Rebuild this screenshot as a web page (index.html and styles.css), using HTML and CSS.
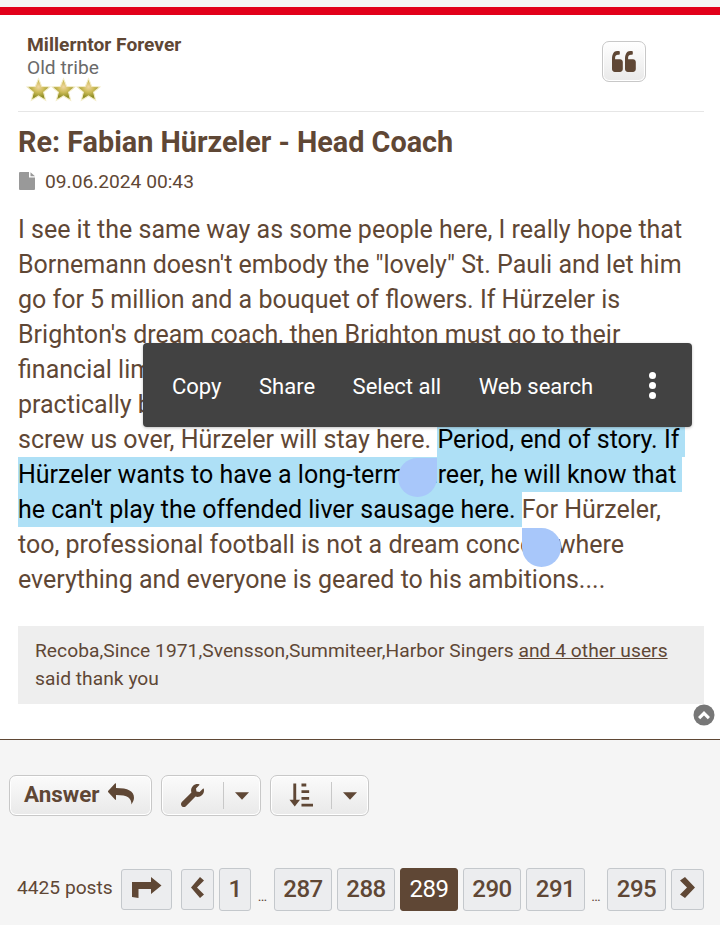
FILE: index.html
```html
<!DOCTYPE html>
<html lang="en">
<head>
<meta charset="utf-8">
<title>Re: Fabian Hürzeler - Head Coach</title>
<link rel="stylesheet" href="styles.css">
</head>
<body>
<svg class="defs" width="0" height="0" aria-hidden="true">
  <defs>
    <radialGradient id="starfill" cx="0.5" cy="0.38" r="0.62">
      <stop offset="0" stop-color="#f0d6a0"/>
      <stop offset="0.4" stop-color="#cdbc58"/>
      <stop offset="0.8" stop-color="#8f8d24"/>
      <stop offset="1" stop-color="#a9a640"/>
    </radialGradient>
    <symbol id="star" viewBox="0 0 24 24">
      <path d="M12 1.500l3 7.400 8 .6-6.100 5.100 2 7.800L12 18.200l-6.900 4.200 2-7.800L1 9.500l8-.6z" fill="url(#starfill)" stroke="#f4edc8" stroke-width="1"/>
    </symbol>
  </defs>
</svg>

<div class="topstrip"></div>

<main class="post">
  <header class="author">
    <div class="author-info">
      <div class="author-name">Millerntor Forever</div>
      <div class="author-rank">Old tribe</div>
      <div class="stars">
        <svg class="star"><use href="#star"/></svg>
        <svg class="star"><use href="#star"/></svg>
        <svg class="star"><use href="#star"/></svg>
      </div>
    </div>
    <button class="quote-btn" aria-label="Quote">
      <svg width="24" height="21" viewBox="0 0 24 21"><path class="ico" d="M5 0h1.800c.6 0 1 .5 1 1v1.800c0 .6-.5 1-1 1H6c-1.700 0-2.900 1.300-2.900 3v1.500H8c1.600 0 2.800 1.200 2.800 2.800v7c0 1.600-1.200 2.900-2.800 2.900H2.800C1.200 21 0 19.700 0 18.100V8C0 3.500 1.800 0 5 0zm13 0h1.800c.6 0 1 .5 1 1v1.800c0 .6-.5 1-1 1H19c-1.700 0-2.900 1.300-2.900 3v1.500H21c1.600 0 2.800 1.200 2.800 2.800v7c0 1.600-1.200 2.900-2.800 2.900h-5.200c-1.600 0-2.800-1.300-2.800-2.900V8c0-4.500 1.800-8 5-8z"/></svg>
    </button>
  </header>

  <h1 class="title">Re: Fabian Hürzeler - Head Coach</h1>
  <div class="meta">
    <svg class="file-ico" width="16" height="18" viewBox="0 0 16 18"><path d="M1 0h9v5.500h6V17a1 1 0 0 1-1 1H1a1 1 0 0 1-1-1V1a1 1 0 0 1 1-1zm10.500.3L16 4.200h-4.500z"/></svg>
    <span>09.06.2024 00:43</span>
  </div>

  <div class="content-wrap">
    <p class="content">I see it the same way as some people here, I really hope that<br>Bornemann doesn't embody the "lovely" St. Pauli and let him<br>go for 5 million and a bouquet of flowers. If Hürzeler is<br>Brighton's dream coach, then Brighton must go to their<br>financial limits and beyond. If they don't, and that is<br>practically blackmail, then Bornemann will simply say no to<br>screw us over, Hürzeler will stay here. <span class="sel">Period, end of story. If</span><br><span class="sel">Hürzeler wants to have a long-term career, he will know that</span><br><span class="sel">he can't play the offended liver sausage here.</span>For Hürzeler,<br>too, professional football is not a dream concert where<br>everything and everyone is geared to his ambitions....</p>

    <div class="handle handle-left"></div>
    <div class="handle handle-right"></div>

    <div class="toolbar">
      <span class="tool-item">Copy</span>
      <span class="tool-item">Share</span>
      <span class="tool-item">Select all</span>
      <span class="tool-item">Web search</span>
      <span class="tool-more"><i></i><i></i><i></i></span>
    </div>
  </div>

  <div class="thanks">Recoba,Since 1971,Svensson,Summiteer,Harbor Singers <u>and 4 other users</u> said thank you</div>

  <div class="back-top">
    <svg width="22" height="22" viewBox="0 0 22 22"><circle cx="11" cy="11" r="10.500" fill="#777"/><path d="M5 13l6-6 6 6-2.200 2.200L11 11.400l-3.800 3.800z" fill="#fff"/></svg>
  </div>
</main>

<section class="actions">
  <button class="btn btn-answer">Answer
    <svg width="26" height="22" viewBox="0 0 26 22"><path class="ico" d="M.3 7.800L7 .6C7.500 0 8 .3 8 1v4c12 0 18 3 18 10 0 3-2 5-2.500 6.500-.2-6.500-3.500-9.500-15.500-9.500v4.200c0 .7-.5 1-1 .4L.3 9.200a1 1 0 0 1 0-1.400z"/></svg>
  </button>
  <button class="btn btn-split" aria-label="Tools">
    <span class="split-main">
      <svg width="23" height="23" viewBox="0 0 512 512"><path class="ico" d="M507.730 109.100c-2.240-9.030-13.540-12.090-20.120-5.510l-74.360 74.360-67.880-11.310-11.310-67.880 74.360-74.360c6.620-6.620 3.430-17.900-5.660-20.160-47.380-11.740-99.550.91-136.580 37.930-39.640 39.640-50.550 97.100-34.050 147.200L18.740 402.760c-24.990 24.990-24.990 65.510 0 90.500 24.990 24.990 65.510 24.990 90.500 0l213.210-213.210c50.120 16.710 107.470 5.680 147.370-34.220 37.070-37.070 49.700-89.320 37.910-136.730z"/></svg>
    </span>
    <span class="split-caret"><svg width="14" height="8" viewBox="0 0 15 8"><path class="ico" d="M0 0h15L7.500 8z"/></svg></span>
  </button>
  <button class="btn btn-split btn-sort" aria-label="Sort">
    <span class="split-main">
      <svg width="24" height="25" viewBox="0 0 25 25"><path class="ico" d="M4.500 0h3v17h4l-5.500 7-5.500-7h4zM13 0h5v3h-5zM13 7h8v3h-8zM13 14h8v3h-8zM13 21h12v3H13z"/></svg>
    </span>
    <span class="split-caret"><svg width="14" height="8" viewBox="0 0 15 8"><path class="ico" d="M0 0h15L7.500 8z"/></svg></span>
  </button>
</section>

<nav class="pager">
  <span class="count">4425 posts</span>
  <a class="pg pg-jump" aria-label="Jump"><svg width="30" height="21" viewBox="0 0 30 21"><path class="ico" d="M19 0l10.500 8.500L19 17v-5H6.500v9L0 20V5h19z"/></svg></a>
  <a class="pg pg-prev" aria-label="Previous"><svg width="13" height="21" viewBox="0 0 13 21"><path class="ico" d="M9 0l4 3.500-7 7 7 7-4 3.500L0 10.500z"/></svg></a>
  <a class="pg pg-1">1</a>
  <span class="dots">…</span>
  <a class="pg">287</a>
  <a class="pg">288</a>
  <a class="pg active">289</a>
  <a class="pg">290</a>
  <a class="pg pg-wide">291</a>
  <span class="dots dots-wide">…</span>
  <a class="pg pg-wide">295</a>
  <a class="pg pg-next" aria-label="Next"><svg width="15" height="21" viewBox="0 0 15 21"><path class="ico" d="M5 0L15 10.500 5 21l-5-3.500 7-7-7-7z"/></svg></a>
</nav>
</body>
</html>
```
FILE: styles.css
```css
* { box-sizing: border-box; }
html, body { margin: 0; padding: 0; }
body {
  width: 720px;
  height: 925px;
  overflow: hidden;
  background: #f5f5f5;
  color: #5f4735;
  font-family: Roboto, "Liberation Sans", sans-serif;
}
.defs { position: absolute; }
.ico { fill: #5f4735; }
.topstrip { height: 7px; background: #f5f5f5; }

.post {
  height: 733px;
  background: #fff;
  border-top: 8px solid #e2001a;
  border-bottom: 1px solid #5f4735;
  padding: 0 16px 0 18px;
}

.author {
  display: flex;
  justify-content: space-between;
  align-items: flex-start;
  height: 97px;
  padding: 18px 58px 0 9px;
  border-bottom: 1px solid #e6e6e6;
}
.author-name { font-size: 19.200px; font-weight: 700; line-height: 23px; }
.author-rank { font-size: 19.200px; line-height: 23px; color: #6a6a6a; }
.stars { display: flex; gap: 0; margin-top: -2px; margin-left: -1px; }
.star { width: 25px; height: 25px; }
.quote-btn {
  width: 44px;
  height: 41px;
  margin-top: 8px;
  padding: 0;
  display: flex;
  align-items: center;
  justify-content: center;
  border: 1px solid #c8c8c8;
  border-radius: 7px;
  background: linear-gradient(#ffffff, #e9e9e9);
  box-shadow: inset 0 0 0 1px #fff;
}

.title {
  margin: 13px 0 0;
  font-size: 28.800px;
  font-weight: 700;
  line-height: 34px;
}
.meta {
  display: flex;
  align-items: center;
  gap: 10px;
  height: 24px;
  margin-top: 10px;
  font-size: 19.200px;
}
.file-ico { margin-left: 1px; fill: #999; }

.content-wrap { position: relative; margin-top: 19px; }
.content {
  margin: 0;
  font-size: 25px;
  line-height: 35px;
  white-space: nowrap;
}
.sel { display: inline-block; background: #aee0f6; color: #000; vertical-align: top; padding-right: 6px; }

.handle { position: absolute; width: 39px; height: 39px; background: #a8c7fa; }
.handle-left { left: 380px; top: 246px; border-radius: 50% 0 50% 50%; }
.handle-right { left: 504px; top: 316px; border-radius: 0 50% 50% 50%; }

.toolbar {
  position: absolute;
  left: 125px;
  top: 131px;
  width: 549px;
  height: 84px;
  padding: 2px 36px 0 29px;
  display: flex;
  align-items: center;
  gap: 37.500px;
  background: #424242;
  border-radius: 4px;
  box-shadow: 0 1px 3px rgba(0,0,0,.25);
  color: #fff;
  font-size: 22px;
}
.tool-more { margin-left: auto; display: flex; flex-direction: column; gap: 3px; margin-bottom: 2px; }
.tool-more i { display: block; width: 7px; height: 7px; border-radius: 50%; background: #fff; }

.thanks {
  margin-top: 29px;
  height: 78px;
  padding: 11px 17px 0;
  background: #eee;
  font-size: 19.200px;
  line-height: 28px;
  letter-spacing: .04px;
}
.back-top { display: flex; justify-content: flex-end; margin: 0 -11px 0 0; }

.actions {
  display: flex;
  gap: 9px;
  padding: 35px 0 0 9px;
}
.btn {
  height: 41px;
  display: flex;
  align-items: center;
  border: 1px solid #c8c8c8;
  border-radius: 7px;
  background: linear-gradient(#fbfbfb, #e9e9e9);
  box-shadow: inset 0 0 0 1px #fff;
  color: #5f4735;
  font-family: Roboto, "Liberation Sans", sans-serif;
  font-size: 22.400px;
  font-weight: 700;
  padding: 0;
}
.btn-answer { width: 143px; padding: 0 0 4px 14px; gap: 9px; }
.btn-split { width: 100px; }
.btn-sort { width: 99px; }
.split-main {
  flex: 1;
  display: flex;
  justify-content: center;
  border-right: 1px solid #c8c8c8;
  height: 27px;
  align-items: center;
}
.split-caret { width: 36px; display: flex; justify-content: center; }

.pager {
  display: flex;
  align-items: center;
  gap: 5px;
  height: 44px;
  margin-top: 51px;
  padding-left: 17px;
}
.count { font-size: 19.200px; width: 99px; margin-bottom: 3px; }
.pg {
  width: 58px;
  height: 43px;
  flex: none;
  display: flex;
  align-items: center;
  justify-content: center;
  border: 1px solid #c4c8cc;
  border-radius: 3px;
  background: #ecedef;
  font-size: 24px;
  font-weight: 500;
  letter-spacing: -.5px;
  color: #5f4735;
}
.pg svg { margin-bottom: 3px; }
.pg-wide { width: 59px; }
.pg-jump { width: 51px; height: 41px; margin-right: 4px; }
.pg-prev { width: 33px; height: 41px; }
.pg-1 { width: 32px; }
.pg-next { width: 33px; height: 41px; }
.active { background: #5f4735; border-color: #5f4735; color: #fff; font-weight: 400; }
.dots { width: 13px; font-size: 14px; text-align: center; align-self: flex-end; padding-bottom: 7px; letter-spacing: 0; }
.dots-wide { width: 12px; }
```
